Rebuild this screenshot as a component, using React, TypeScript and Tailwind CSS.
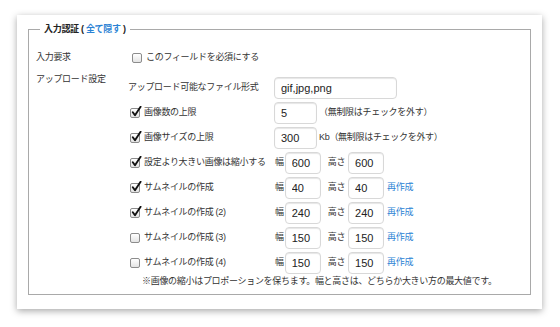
const font = "font-['Liberation_Sans','Noto_Sans_CJK_JP',sans-serif]";

function Box({ checked }: { checked?: boolean }) {
  return (
    <span className="relative mr-[4px] ml-[2px] inline-block h-[10px] w-[10px] shrink-0 rounded-[2px] border border-[#8c8c8c] bg-linear-to-b from-white to-[#e4e4e4]">
      {checked && (
        <svg className="absolute -top-[3px] left-[0px] h-[11px] w-[11px]" viewBox="0 0 11 11">
          <path d="M1.8 6.2 L4 9.2 L9.6 0.8" fill="none" stroke="#111" strokeWidth="1.9" strokeLinecap="round" strokeLinejoin="round" />
        </svg>
      )}
    </span>
  );
}

function Field({ value, w }: { value: string; w: string }) {
  return (
    <input
      readOnly
      value={value}
      className={`${w} h-[22px] rounded-[4px] border border-[#d8d8d8] bg-white pl-[6px] text-[11px] text-[#222] shadow-[inset_0_1px_1px_rgba(0,0,0,0.1)] outline-none`}
    />
  );
}

const jp = "text-[9px] tracking-[-0.3px] text-[#333]";

function Label({ text, checked, box = true }: { text: string; checked?: boolean; box?: boolean }) {
  return (
    <div className="flex w-[146px] shrink-0 items-center">
      {box && <Box checked={checked} />}
      <span className={jp}>{text}</span>
    </div>
  );
}

function SizeRow({ text, checked, w, h, redo }: { text: string; checked: boolean; w: string; h: string; redo?: boolean }) {
  return (
    <div className="flex h-[22px] items-center">
      <Label text={text} checked={checked} />
      <span className={`${jp} ml-[1px] mr-[1px]`}>幅</span>
      <Field value={w} w="w-[36px]" />
      <span className={`${jp} ml-[7px] mr-[3px]`}>高さ</span>
      <Field value={h} w="w-[36px]" />
      {redo && <span className="ml-[3px] text-[9px] tracking-[-0.3px] text-[#2b82d4]">再作成</span>}
    </div>
  );
}

export default function App() {
  return (
    <div className={`min-h-[327px] bg-white pt-[15px] pr-[18px] pl-[17px] ${font}`}>
      <div className="h-[294px] bg-white px-[11px] pt-[7px] shadow-[0_2px_7px_rgba(0,0,0,0.35)]">
        <fieldset className="border border-[#a9a9a9] pt-[11px] pb-[7px] pl-[7px]">
          <legend className="ml-[4px] px-[4px] text-[9px] leading-[14px] font-bold tracking-[-0.3px] text-[#222]">
            入力認証 ( <span className="text-[#2b82d4]">全て隠す</span> )
          </legend>
          <div className="flex h-[22px] items-center">
            <div className={`w-[94px] ${jp}`}>入力要求</div>
            <Box />
            <span className={jp}>このフィールドを必須にする</span>
          </div>
          <div className="mt-[3px] flex">
            <div className={`w-[92px] leading-[14px] ${jp}`}>アップロード設定</div>
            <div className="flex flex-col gap-[3px] pt-[5px]">
              <div className="flex h-[22px] items-center">
                <Label text="アップロード可能なファイル形式" box={false} />
                <Field value="gif,jpg,png" w="w-[123px]" />
              </div>
              <div className="flex h-[22px] items-center">
                <Label text="画像数の上限" checked />
                <Field value="5" w="w-[43px]" />
                <span className={`${jp} ml-[2px]`}>（無制限はチェックを外す）</span>
              </div>
              <div className="flex h-[22px] items-center">
                <Label text="画像サイズの上限" checked />
                <Field value="300" w="w-[43px]" />
                <span className={`${jp} ml-[2px]`}>Kb（無制限はチェックを外す）</span>
              </div>
              <SizeRow text="設定より大きい画像は縮小する" checked w="600" h="600" />
              <SizeRow text="サムネイルの作成" checked w="40" h="40" redo />
              <SizeRow text="サムネイルの作成 (2)" checked w="240" h="240" redo />
              <SizeRow text="サムネイルの作成 (3)" checked={false} w="150" h="150" redo />
              <SizeRow text="サムネイルの作成 (4)" checked={false} w="150" h="150" redo />
              <div className={`-mt-[2px] pl-[14px] leading-[12px] ${jp}`}>
                ※画像の縮小はプロポーションを保ちます。幅と高さは、どちらか大きい方の最大値です。
              </div>
            </div>
          </div>
        </fieldset>
      </div>
    </div>
  );
}
